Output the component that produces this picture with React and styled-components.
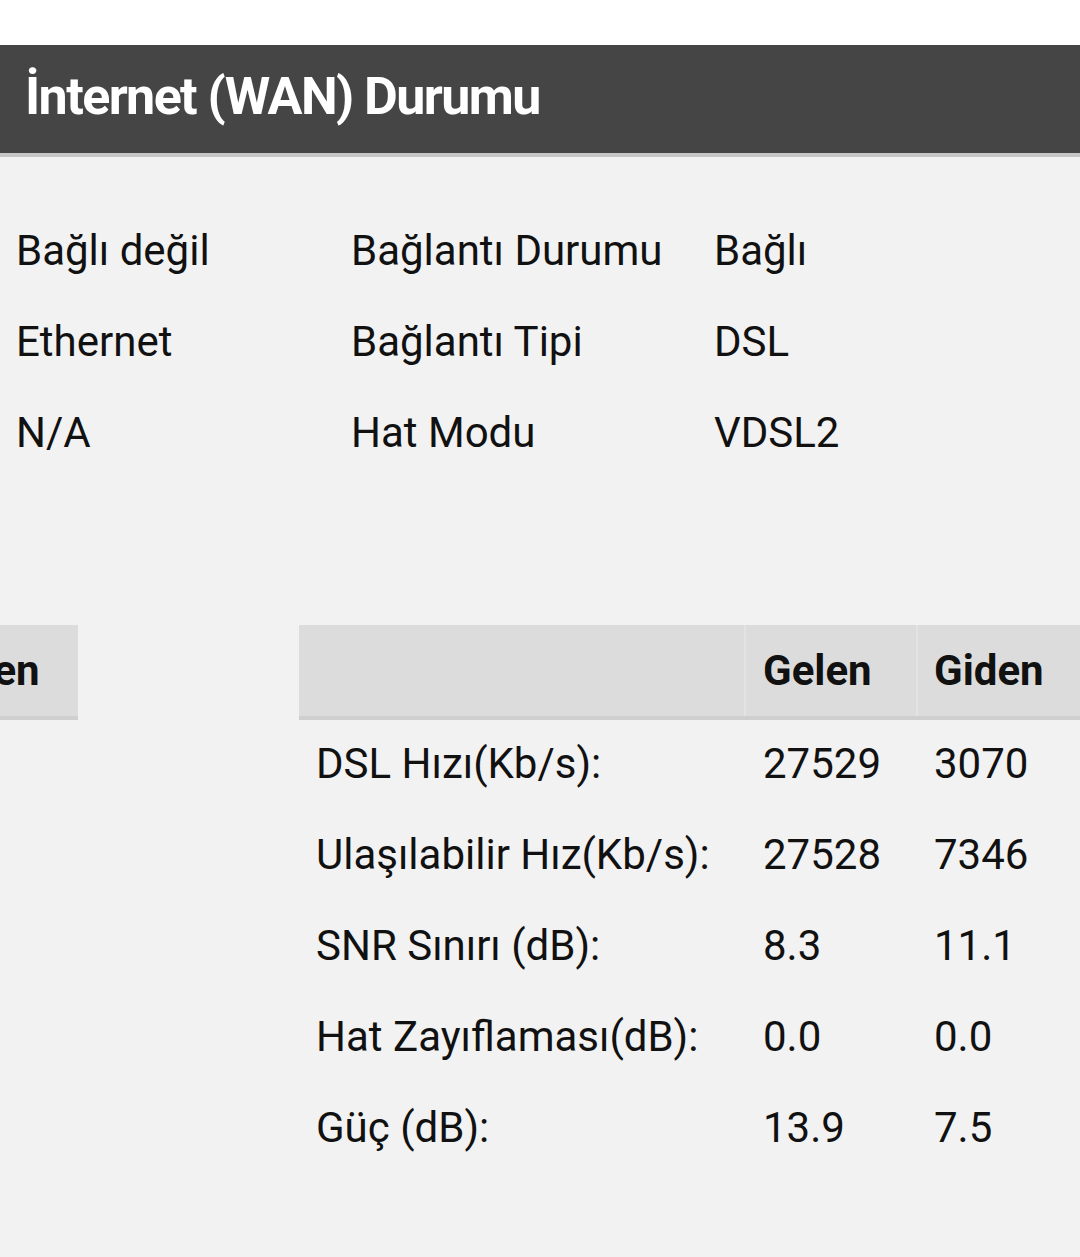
import React from 'react';
import styled, { createGlobalStyle } from 'styled-components';

const GlobalStyle = createGlobalStyle`
    html, body {
        margin: 0;
        padding: 0;
        background: #f2f2f2;
        overflow: hidden;
    }
    body {
        font-family: Roboto, "Noto Sans", sans-serif;
        color: #111;
    }
`;

const Page = styled.div`
    width: 1080px;
    min-height: 1257px;
    background: #f2f2f2;
    overflow: hidden;
`;

const TopStrip = styled.div`
    height: 45px;
    background: #ffffff;
`;

const TitleBar = styled.div`
    height: 108px;
    background: #454545;
    border-bottom: 4px solid #c6c6c6;
    display: flex;
    align-items: center;
    padding-left: 25px;
`;

const Title = styled.h1`
    margin: 0;
    font-size: 52px;
    font-weight: 700;
    color: #ffffff;
    letter-spacing: -1.6px;
    line-height: 1;
    padding-bottom: 4px;
`;

const InfoGrid = styled.div`
    display: grid;
    grid-template-columns: 335px 363px 1fr;
    padding: 48px 0 0 16px;
`;

const InfoCell = styled.div`
    font-size: 42px;
    line-height: 91px;
    height: 91px;
    white-space: nowrap;
`;

const Tables = styled.div`
    display: flex;
    align-items: flex-start;
    margin-top: 147px;
    gap: 221px;
`;

const Clip = styled.div`
    width: 78px;
    overflow: hidden;
    display: flex;
    justify-content: flex-end;
    flex-shrink: 0;
`;

const Table = styled.table`
    border-collapse: collapse;
    font-size: 42px;
    flex-shrink: 0;
`;

const Th = styled.th`
    background: #dcdcdc;
    border-bottom: 4px solid #cfcfcf;
    border-left: ${p => (p.$sep ? '2px solid #e3e3e3' : 'none')};
    height: 93px;
    padding: 0 0 0 ${p => p.$pad || 17}px;
    width: ${p => p.$w}px;
    min-width: ${p => p.$w}px;
    text-align: left;
    font-weight: 700;
    white-space: nowrap;
    box-sizing: border-box;
`;

const Td = styled.td`
    height: 91px;
    padding: 0 0 4px ${p => p.$pad || 17}px;
    white-space: nowrap;
    line-height: 87px;
    box-sizing: border-box;
`;

const info = [
    ['Bağlı değil', 'Bağlantı Durumu', 'Bağlı'],
    ['Ethernet', 'Bağlantı Tipi', 'DSL'],
    ['N/A', 'Hat Modu', 'VDSL2'],
];

const dsl = [
    ['DSL Hızı(Kb/s):', '27529', '3070'],
    ['Ulaşılabilir Hız(Kb/s):', '27528', '7346'],
    ['SNR Sınırı (dB):', '8.3', '11.1'],
    ['Hat Zayıflaması(dB):', '0.0', '0.0'],
    ['Güç (dB):', '13.9', '7.5'],
];

export default function App() {
    return (
        <Page>
            <GlobalStyle />
            <TopStrip />
            <TitleBar>
                <Title>İnternet (WAN) Durumu</Title>
            </TitleBar>
            <InfoGrid>
                {info.map(row => row.map((c, i) => <InfoCell key={row[0] + i}>{c}</InfoCell>))}
            </InfoGrid>
            <Tables>
                <Clip>
                    <Table>
                        <thead>
                            <tr>
                                <Th $w={167} $pad={19}>Giden</Th>
                            </tr>
                        </thead>
                    </Table>
                </Clip>
                <Table>
                    <thead>
                        <tr>
                            <Th $w={446}></Th>
                            <Th $w={172} $pad={17} $sep>Gelen</Th>
                            <Th $w={172} $pad={16} $sep>Giden</Th>
                        </tr>
                    </thead>
                    <tbody>
                        {dsl.map(r => (
                            <tr key={r[0]}>
                                <Td>{r[0]}</Td>
                                <Td $pad={18}>{r[1]}</Td>
                                <Td $pad={17}>{r[2]}</Td>
                            </tr>
                        ))}
                    </tbody>
                </Table>
            </Tables>
        </Page>
    );
}
